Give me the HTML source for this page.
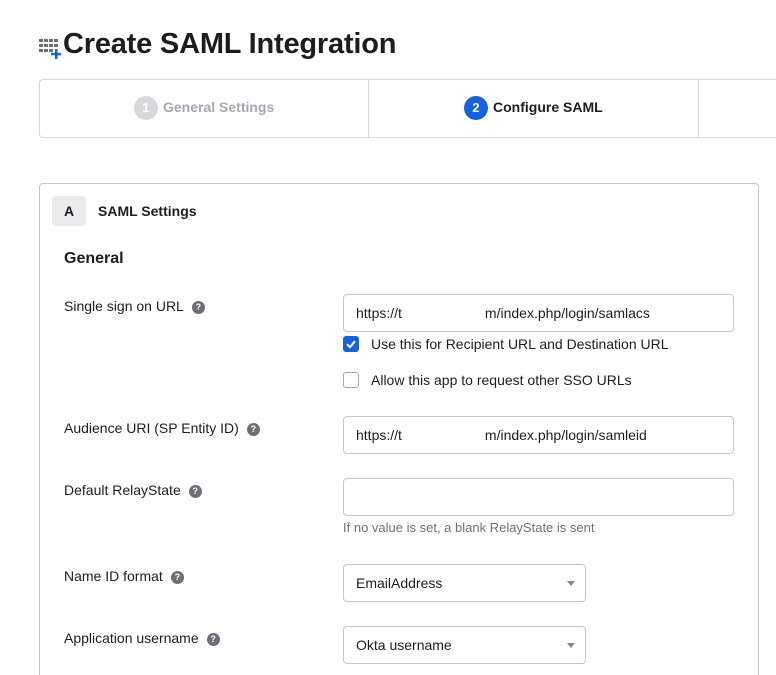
<!DOCTYPE html>
<html style="width:776px;height:675px;overflow:hidden"><head><meta charset="utf-8"><style>
*{box-sizing:border-box;margin:0;padding:0}
body{width:776px;height:675px;overflow:hidden;background:#fff;font-family:"Liberation Sans",sans-serif;color:#1d1d21;position:relative}
.a{position:absolute}
.lbl{font-size:14px;color:#1d1d21}
.q{display:inline-block;width:13px;height:13px;border-radius:50%;background:#6e6e78;color:#fff;font-size:9px;font-weight:bold;text-align:center;line-height:13px;vertical-align:1px;margin-left:8px}
.in{border:1px solid #c5c5ce;border-radius:4px;height:38px;font-size:14px;padding:0 12px;line-height:36px}
.cb{width:16px;height:16px;border-radius:3px}
.arr{position:absolute;right:10px;top:16px;border-left:4px solid transparent;border-right:4px solid transparent;border-top:5px solid #888}
</style></head><body>
<svg class="a" style="left:39px;top:37px" width="26" height="24" viewBox="0 0 26 24">
<g fill="#6e6e78"><rect x="0" y="2" width="4" height="3"/><rect x="5" y="2" width="4" height="3"/><rect x="10" y="2" width="4" height="3"/><rect x="15" y="2" width="4" height="3"/>
<rect x="0" y="7" width="4" height="3"/><rect x="5" y="7" width="4" height="3"/><rect x="10" y="7" width="4" height="3"/><rect x="15" y="7" width="4" height="3"/>
<rect x="0" y="12" width="4" height="3"/><rect x="5" y="12" width="4" height="3"/><rect x="10" y="12" width="4" height="3"/></g>
<g fill="#1662dd"><rect x="16" y="12" width="2.5" height="10"/><rect x="12" y="15.8" width="10" height="2.5"/></g></svg>
<div class="a" style="left:63px;top:28px;font-size:29px;font-weight:bold;letter-spacing:-0.2px">Create SAML Integration</div>
<div class="a" style="left:39px;top:79px;width:760px;height:59px;border:1px solid #d7d7dc;border-radius:4px"></div>
<div class="a" style="left:368px;top:80px;width:1px;height:57px;background:#d7d7dc"></div>
<div class="a" style="left:698px;top:80px;width:1px;height:57px;background:#d7d7dc"></div>
<div class="a" style="left:134px;top:96px;width:24px;height:24px;border-radius:50%;background:#d7d7dc;color:#fff;font-weight:bold;font-size:13px;text-align:center;line-height:24px">1</div>
<div class="a" style="left:163px;top:99px;font-size:14px;font-weight:bold;color:#a7a7b2">General Settings</div>
<div class="a" style="left:464px;top:96px;width:24px;height:24px;border-radius:50%;background:#1662dd;color:#fff;font-weight:bold;font-size:13px;text-align:center;line-height:24px">2</div>
<div class="a" style="left:493px;top:99px;font-size:14px;font-weight:bold">Configure SAML</div>
<div class="a" style="left:39px;top:183px;width:720px;height:520px;border:1px solid #c5c5ce;border-radius:4px"></div>
<div class="a" style="left:52px;top:196px;width:34px;height:30px;border-radius:4px;background:#ebebed;font-weight:bold;font-size:14px;text-align:center;line-height:30px">A</div>
<div class="a" style="left:98px;top:203px;font-size:14px;font-weight:bold">SAML Settings</div>
<div class="a" style="left:64px;top:250px;font-size:16px;font-weight:bold">General</div>
<div class="a lbl" style="left:64px;top:298px">Single sign on URL<span class="q">?</span></div>
<div class="a in" style="left:343px;top:294px;width:391px">https://t<span style="display:inline-block;width:83px"></span>m/index.php/login/samlacs</div>
<div class="a cb" style="left:343px;top:336px;background:#1662dd"><svg width="16" height="16"><path d="M4 8.2l3 3 5-6" stroke="#fff" stroke-width="2" fill="none"/></svg></div>
<div class="a lbl" style="left:371px;top:336px">Use this for Recipient URL and Destination URL</div>
<div class="a cb" style="left:343px;top:372px;border:1.5px solid #a7a7b2"></div>
<div class="a lbl" style="left:371px;top:372px">Allow this app to request other SSO URLs</div>
<div class="a lbl" style="left:64px;top:420px">Audience URI (SP Entity ID)<span class="q">?</span></div>
<div class="a in" style="left:343px;top:416px;width:391px">https://t<span style="display:inline-block;width:83px"></span>m/index.php/login/samleid</div>
<div class="a lbl" style="left:64px;top:482px">Default RelayState<span class="q">?</span></div>
<div class="a in" style="left:343px;top:478px;width:391px"></div>
<div class="a" style="left:343px;top:520px;font-size:13px;color:#6e6e78">If no value is set, a blank RelayState is sent</div>
<div class="a lbl" style="left:64px;top:568px">Name ID format<span class="q">?</span></div>
<div class="a in" style="left:343px;top:564px;width:243px">EmailAddress<div class="arr"></div></div>
<div class="a lbl" style="left:64px;top:630px">Application username<span class="q">?</span></div>
<div class="a in" style="left:343px;top:626px;width:243px">Okta username<div class="arr"></div></div>
</body></html>
